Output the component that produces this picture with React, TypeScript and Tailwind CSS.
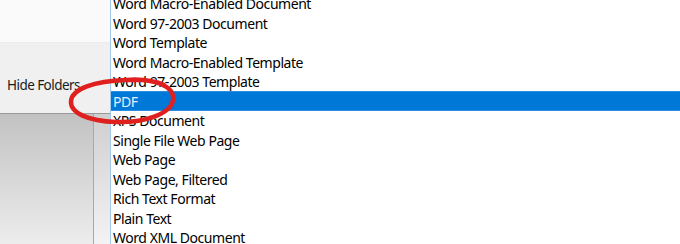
const items = [
  'Word Macro-Enabled Document',
  'Word 97-2003 Document',
  'Word Template',
  'Word Macro-Enabled Template',
  'Word 97-2003 Template',
  'PDF',
  'XPS Document',
  'Single File Web Page',
  'Web Page',
  'Web Page, Filtered',
  'Rich Text Format',
  'Plain Text',
  'Word XML Document',
];

const SELECTED = 'PDF';

export default function App() {
  return (
    <div className="relative flex w-[680px] h-[244px] overflow-hidden bg-white font-['Noto_Sans',sans-serif]">
      {/* left side of the save dialog */}
      <div className="flex flex-col w-[110px] shrink-0">
        <div className="h-[43px] bg-[#fafafa] border-b border-[#ececec]" />
        <div className="h-[70px] bg-[#f0f0f0] flex items-center pl-[7px] pt-[15px] text-[13.5px] tracking-[-0.55px] text-[#1a1a1a]">
          Hide Folders
        </div>
        <div className="h-px bg-[#9a9a9a]" />
        <div className="flex flex-1">
          <div className="w-[93px] bg-gradient-to-b from-[#c2c2c2] to-[#ededed]" />
          <div className="w-px bg-[#a8a8a8]" />
          <div className="flex-1 bg-gradient-to-b from-[#cfcfcf] to-[#f3f3f3]" />
        </div>
      </div>

      {/* file type list */}
      <div className="flex-1 border-l border-[#a3c9ee] bg-white">
        <ul className="-mt-[6.5px] text-[14px] tracking-[-0.45px] text-black">
          {items.map((item) =>
            item === SELECTED ? (
              <li
                key={item}
                className="h-[19.5px] flex items-center pl-[2px] pt-px bg-[#0078d7] border-y border-[#2b8ce0] text-[#e4eefa]"
              >
                {item}
              </li>
            ) : (
              <li key={item} className="h-[19.5px] flex items-center pl-[2px] pt-px">
                {item}
              </li>
            )
          )}
        </ul>
      </div>

      {/* red annotation circle */}
      <svg
        className="absolute left-[62px] top-[71px] pointer-events-none"
        width="124"
        height="57"
        viewBox="0 0 124 57"
        fill="none"
      >
        <path
          d="M64 9 C 92 7, 113 15, 111 29 C 109 43, 82 52, 54 51 C 26 50, 8 42, 9 30 C 10 18, 32 10, 64 9 C 80 8, 94 10, 102 14"
          stroke="#e0201f"
          strokeWidth="4.5"
          strokeLinecap="round"
        />
      </svg>
    </div>
  );
}
